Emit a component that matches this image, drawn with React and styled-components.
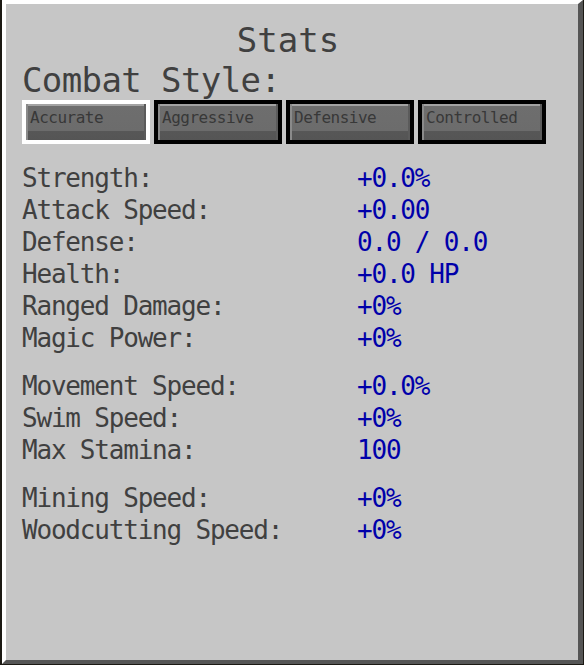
import React from "react";
import styled, { createGlobalStyle } from "styled-components";

const Global = createGlobalStyle`
  html, body { margin: 0; padding: 0; background: #1b1913; }
  body { width: 584px; height: 665px; overflow: hidden; }
  * { box-sizing: border-box; }
`;

const Panel = styled.div`
  margin-left: 2px;
  width: 581px;
  height: 664px;
  background: #c6c6c6;
  border-style: solid;
  border-width: 4px 5px 4px 4px;
  border-color: #ffffff #555555 #555555 #ffffff;
  padding: 16px 0 0 16px;
  font-family: "DejaVu Sans Mono", "Liberation Mono", monospace;
  color: #404040;
`;

const Title = styled.div`
  font-size: 34px;
  line-height: 40px;
  height: 40px;
  text-align: center;
  padding-right: 24px;
  white-space: pre;
`;

const Heading = styled.div`
  font-size: 34px;
  line-height: 40px;
  height: 40px;
  letter-spacing: -0.6px;
  white-space: pre;
`;

const ButtonRow = styled.div`
  display: flex;
  gap: 4px;
`;

const StyleButton = styled.div`
  width: 128px;
  height: 44px;
  border: 4px solid ${(p) => (p.$selected ? "#ffffff" : "#000000")};
  background: linear-gradient(
    to bottom,
    #a3a3a3 0,
    #a3a3a3 2px,
    #6e6e6e 2px,
    #6c6c6c calc(100% - 9px),
    #575757 calc(100% - 9px),
    #555555 100%
  );
  box-shadow: inset 2px 0 0 #8a8a8a, inset -2px 0 0 #5b5b5b;
  padding: 4px 0 0 4px;
  font-size: 16px;
  line-height: 20px;
  letter-spacing: -0.5px;
  color: #383838;
  white-space: pre;
`;

const StatList = styled.div`
  margin-top: 18px;
  display: flex;
  flex-direction: column;
  gap: 16px;
`;

const Group = styled.div`
  display: flex;
  flex-direction: column;
`;

const Row = styled.div`
  display: grid;
  grid-template-columns: 335px auto;
  font-size: 26px;
  line-height: 32px;
  height: 32px;
  letter-spacing: -1.2px;
  white-space: pre;
`;

const Label = styled.span`
  color: #404040;
`;

const Value = styled.span`
  color: #0000aa;
`;

const groups = [
  [
    ["Strength:", "+0.0%"],
    ["Attack Speed:", "+0.00"],
    ["Defense:", "0.0 / 0.0"],
    ["Health:", "+0.0 HP"],
    ["Ranged Damage:", "+0%"],
    ["Magic Power:", "+0%"],
  ],
  [
    ["Movement Speed:", "+0.0%"],
    ["Swim Speed:", "+0%"],
    ["Max Stamina:", "100"],
  ],
  [
    ["Mining Speed:", "+0%"],
    ["Woodcutting Speed:", "+0%"],
  ],
];

const styles = ["Accurate", "Aggressive", "Defensive", "Controlled"];

export default function App() {
  return (
    <>
      <Global />
      <Panel>
        <Title>Stats</Title>
        <Heading>Combat Style:</Heading>
        <ButtonRow>
          {styles.map((s, i) => (
            <StyleButton key={s} $selected={i === 0}>
              {s}
            </StyleButton>
          ))}
        </ButtonRow>
        <StatList>
          {groups.map((g, gi) => (
            <Group key={gi}>
              {g.map(([l, v]) => (
                <Row key={l}>
                  <Label>{l}</Label>
                  <Value>{v}</Value>
                </Row>
              ))}
            </Group>
          ))}
        </StatList>
      </Panel>
    </>
  );
}
